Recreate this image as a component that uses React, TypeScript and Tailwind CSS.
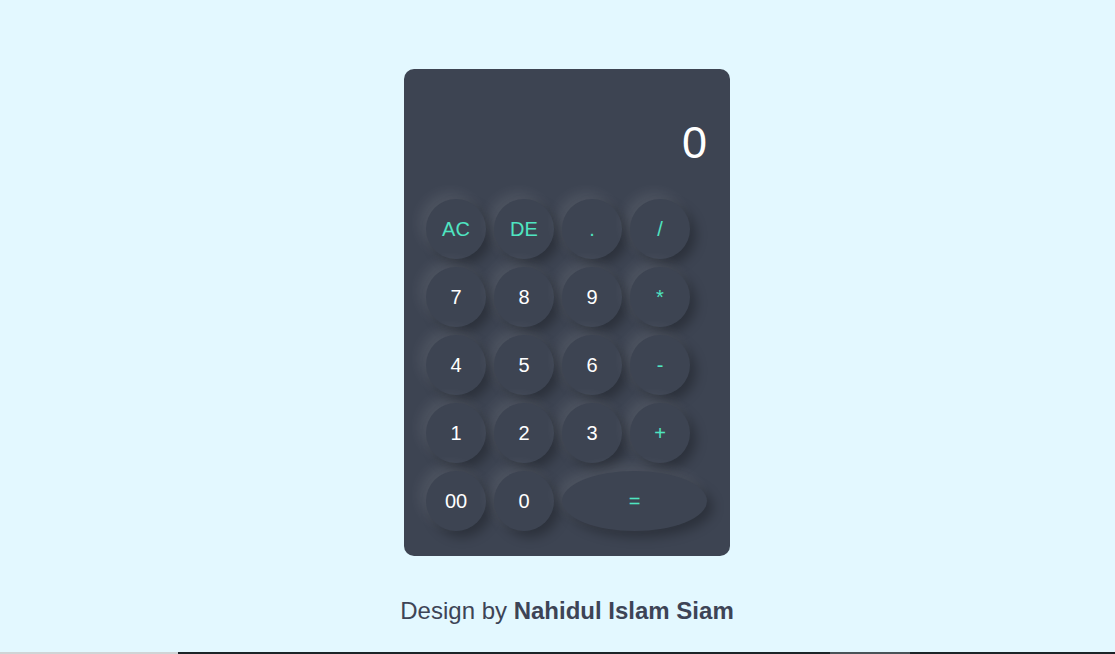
const keys = [
  { label: "AC", accent: true },
  { label: "DE", accent: true },
  { label: ".", accent: true },
  { label: "/", accent: true },
  { label: "7" },
  { label: "8" },
  { label: "9" },
  { label: "*", accent: true },
  { label: "4" },
  { label: "5" },
  { label: "6" },
  { label: "-", accent: true },
  { label: "1" },
  { label: "2" },
  { label: "3" },
  { label: "+", accent: true },
  { label: "00" },
  { label: "0" },
];

export default function App() {
  return (
    <div className="flex min-h-screen flex-col items-center bg-[#e3f8ff] pl-[19px] font-['Liberation_Sans',Arial,sans-serif]">
      <div className="mt-[69px] h-[487px] w-[326px] rounded-[10px] bg-[#3d4452]">
        <div className="pt-[51px] pr-[23px] text-right text-[45px] leading-none text-white">0</div>
        <div className="mt-[34px] grid grid-cols-[repeat(4,60px)] auto-rows-[60px] gap-2 px-[22px]">
          {keys.map((k, i) => (
            <button
              key={i}
              className={`flex h-[60px] w-[60px] items-center justify-center rounded-full bg-[#3d4452] text-[20px] shadow-[-6px_-6px_14px_rgba(255,255,255,0.09),6px_6px_12px_rgba(0,0,0,0.28)] ${
                k.accent ? "text-[#4fe5c1]" : "text-white"
              }`}
            >
              {k.label}
            </button>
          ))}
          <button className="col-span-2 flex h-[60px] w-[145px] items-center justify-center rounded-[50%] bg-[#3d4452] text-[20px] text-[#4fe5c1] shadow-[-6px_-6px_14px_rgba(255,255,255,0.09),6px_6px_12px_rgba(0,0,0,0.28)]">
            =
          </button>
        </div>
      </div>
      <p className="mt-[37px] text-[24px] text-[#3d4456]">
        Design by <span className="font-bold">Nahidul Islam Siam</span>
      </p>
      <div className="flex-1" />
      <div className="-ml-[19px] flex h-[2px] w-[calc(100%+19px)]">
        <div className="w-[178px] bg-[#d0d4d6]" />
        <div className="w-[652px] bg-[#1c2428]" />
        <div className="w-[80px] bg-[#4a5358]" />
        <div className="flex-1 bg-[#1c2428]" />
      </div>
    </div>
  );
}
